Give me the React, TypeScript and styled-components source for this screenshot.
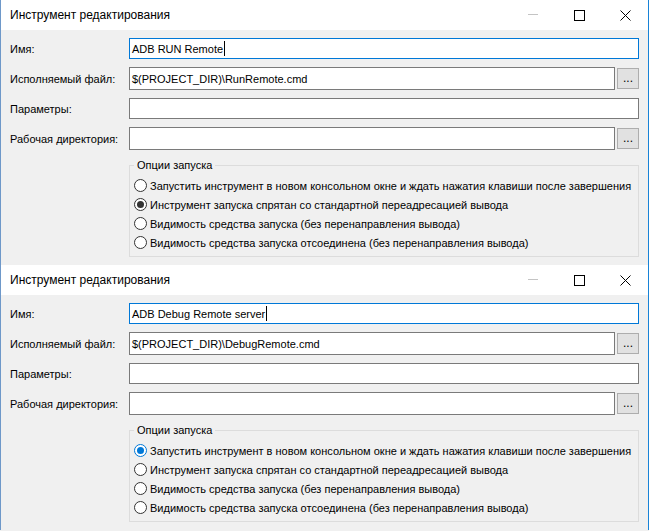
import React from 'react';
import styled, { createGlobalStyle } from 'styled-components';

const GlobalStyle = createGlobalStyle`
  html, body {
    margin: 0;
    padding: 0;
    background: #f0f0f0;
  }
  body {
    font-family: "Liberation Sans", "Segoe UI", sans-serif;
    font-size: 11px;
    color: #000000;
  }
  #root {
    height: 531px;
    overflow: hidden;
  }
`;

const Window = styled.div`
  display: flex;
  flex-direction: column;
  width: 649px;
  height: 265px;
  box-sizing: border-box;
  border-left: 1px solid #6e98c9;
  border-right: 1px solid #1883d7;
`;

const TitleBar = styled.div`
  display: flex;
  align-items: center;
  height: 30px;
  flex-shrink: 0;
  background: #ffffff;
`;

const Title = styled.div`
  flex: 1;
  padding-left: 9px;
  font-size: 12px;
  white-space: nowrap;
`;

const ControlButton = styled.div`
  display: flex;
  align-items: center;
  justify-content: center;
  width: 46px;
  height: 30px;
`;

const Body = styled.div`
  flex: 1;
  background: #f0f0f0;
  padding: 8px 9px 0 9px;
`;

const FieldRow = styled.div`
  display: flex;
  align-items: center;
  margin-bottom: 8px;
`;

const Label = styled.div`
  width: 119px;
  flex-shrink: 0;
  white-space: nowrap;
`;

const TextBox = styled.div<{ $tall?: boolean; $focused?: boolean }>`
  flex: 1;
  display: flex;
  align-items: center;
  box-sizing: border-box;
  height: ${(p) => (p.$tall ? 23 : 21)}px;
  padding: 0 2px;
  background: #ffffff;
  border: 1px solid ${(p) => (p.$focused ? '#0078d7' : '#7a7a7a')};
  white-space: nowrap;
  overflow: hidden;
`;

const Caret = styled.span`
  display: inline-block;
  width: 1px;
  height: 15px;
  margin-left: 1px;
  background: #000000;
`;

const BrowseButton = styled.button`
  width: 22px;
  height: 21px;
  margin-left: 2px;
  padding: 0;
  box-sizing: border-box;
  background: #e1e1e1;
  border: 1px solid #adadad;
  font-family: inherit;
  font-size: 12px;
  color: #000000;
  line-height: 19px;
`;

const Group = styled.fieldset`
  margin: -1px 0 0 119px;
  padding: 3px 0 4px 4px;
  border: 1px solid #dcdcdc;
  min-width: 0;
`;

const Legend = styled.legend`
  padding: 0 3px;
  line-height: 16px;
`;

const RadioRow = styled.div`
  display: flex;
  align-items: center;
  height: 19px;
  white-space: nowrap;
`;

const RadioCircle = styled.span<{ $checked?: boolean; $accent?: boolean }>`
  display: flex;
  align-items: center;
  justify-content: center;
  width: 13px;
  height: 13px;
  box-sizing: border-box;
  margin-right: 3px;
  flex-shrink: 0;
  border-radius: 50%;
  background: #ffffff;
  border: 1px solid ${(p) => (p.$accent ? '#0078d7' : '#333333')};
  &::after {
    content: '';
    display: ${(p) => (p.$checked ? 'block' : 'none')};
    width: 7px;
    height: 7px;
    border-radius: 50%;
    background: ${(p) => (p.$accent ? '#0078d7' : '#333333')};
  }
`;

const options = [
  'Запустить инструмент в новом консольном окне и ждать нажатия клавиши после завершения',
  'Инструмент запуска спрятан со стандартной переадресацией вывода',
  'Видимость средства запуска (без перенаправления вывода)',
  'Видимость средства запуска отсоединена (без перенаправления вывода)',
];

const WindowControls = () => (
  <>
    <ControlButton>
      <svg width="10" height="10" viewBox="0 0 10 10">
        <line x1="0" y1="4.5" x2="10" y2="4.5" stroke="#c4c4c4" strokeWidth="1" />
      </svg>
    </ControlButton>
    <ControlButton>
      <svg width="11" height="11" viewBox="0 0 11 11">
        <rect x="0.5" y="0.5" width="10" height="10" fill="none" stroke="#000" strokeWidth="1" />
      </svg>
    </ControlButton>
    <ControlButton>
      <svg width="11" height="11" viewBox="0 0 11 11">
        <path d="M0.5 0.5 L10.5 10.5 M10.5 0.5 L0.5 10.5" stroke="#000" strokeWidth="1" />
      </svg>
    </ControlButton>
  </>
);

type EditToolProps = {
  name: string;
  command: string;
  selected: number;
  accent?: boolean;
};

const EditToolWindow = ({ name, command, selected, accent }: EditToolProps) => (
  <Window>
    <TitleBar>
      <Title>Инструмент редактирования</Title>
      <WindowControls />
    </TitleBar>
    <Body>
      <FieldRow>
        <Label>Имя:</Label>
        <TextBox $focused>
          {name}
          <Caret />
        </TextBox>
      </FieldRow>
      <FieldRow>
        <Label>Исполняемый файл:</Label>
        <TextBox $tall>{command}</TextBox>
        <BrowseButton>...</BrowseButton>
      </FieldRow>
      <FieldRow>
        <Label>Параметры:</Label>
        <TextBox />
      </FieldRow>
      <FieldRow>
        <Label>Рабочая директория:</Label>
        <TextBox $tall />
        <BrowseButton>...</BrowseButton>
      </FieldRow>
      <Group>
        <Legend>Опции запуска</Legend>
        {options.map((text, i) => (
          <RadioRow key={i}>
            <RadioCircle $checked={i === selected} $accent={accent && i === selected} />
            {text}
          </RadioRow>
        ))}
      </Group>
    </Body>
  </Window>
);

const App = () => (
  <>
    <GlobalStyle />
    <EditToolWindow name="ADB RUN Remote" command="$(PROJECT_DIR)\RunRemote.cmd" selected={1} />
    <EditToolWindow
      name="ADB Debug Remote server"
      command="$(PROJECT_DIR)\DebugRemote.cmd"
      selected={0}
      accent
    />
  </>
);

export default App;
